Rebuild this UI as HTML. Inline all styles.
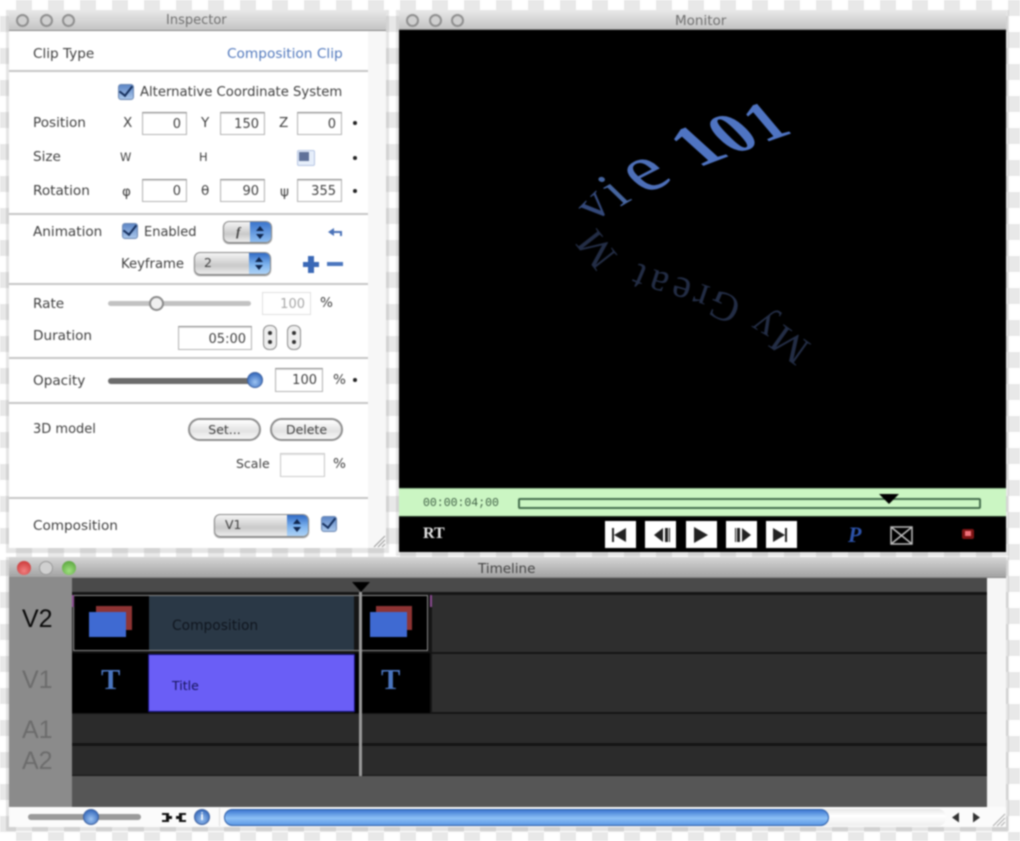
<!DOCTYPE html>
<html><head><meta charset="utf-8"><title>Inspector</title>
<style>
html,body{margin:0;padding:0;background:#fff}
#p{position:relative;width:1020px;height:841px;overflow:hidden;filter:blur(.8px);
background-color:#fff;background-image:conic-gradient(#e8e8e8 25%,#fff 0 50%,#e8e8e8 0 75%,#fff 0);background-size:32px 32px;font-family:"DejaVu Sans","Liberation Sans",sans-serif;font-size:13.6px;color:#404040}
#p div{position:absolute;box-sizing:border-box}
.t{white-space:nowrap;line-height:16px;height:16px}
.f{background:#fff;border:1px solid #b4b4b4;border-top-color:#8c8c8c;text-align:right;padding-right:5px;line-height:23px;font-size:13px;box-shadow:inset 0 1px 1px #ddd}
.h{left:9px;width:359px;height:2px;background:#c6c6c6}
.tb{background:linear-gradient(#e8e8e8,#c4c4c4);border-bottom:1px solid #888}
.l{width:13px;height:13px;border-radius:50%;border:2px solid #8f8f8f;background:#d0d0d0}
.d{width:4px;height:4px;border-radius:50%;background:#222}
.cb{width:16px;height:16px;border-radius:3px;background:linear-gradient(#5d86c6,#a9c6ea);border:1px solid #6b87b2}
.cb:after{content:"";position:absolute;left:3px;top:-2px;width:6px;height:11px;border:solid #16305e;border-width:0 2.5px 2.5px 0;transform:rotate(38deg)}
.pop{border:1px solid #8a8a8a;border-radius:6px;background:linear-gradient(#f4f4f4,#c9c9c9 60%,#ececec);box-shadow:0 1px 1px #888;overflow:hidden;padding-left:9px;line-height:20px;font-size:12.5px}
.pop i{position:absolute;right:0;top:0;bottom:0;width:21px;background:linear-gradient(#2f69c4,#7db3ee 55%,#aed3f6)}
.pop i:before{content:"";position:absolute;left:6px;top:4px;border:4px solid transparent;border-top:0;border-bottom:5px solid #10264d}
.pop i:after{content:"";position:absolute;left:6px;top:12px;border:4px solid transparent;border-bottom:0;border-top:5px solid #10264d}
.btn{border:2px solid #8e8e8e;border-radius:12px;background:linear-gradient(#fff,#e2e2e2 55%,#f6f6f6);text-align:center;line-height:19px;font-size:12.5px}
.st{width:14px;height:25px;border:1.5px solid #8b8b8b;border-radius:6px;background:#eee}
.st:before,.st:after{content:"";position:absolute;left:3.5px;width:4px;height:4px;background:#333;border-radius:50%}
.st:before{top:5px}.st:after{bottom:5px}
.kb{width:16px;height:16px;border-radius:50%;background:radial-gradient(circle at 50% 65%,#9cc3f2,#3468bb 80%);border:1px solid #3c5f9d}
.mb{width:31px;height:27px;background:#fff;top:521px}
.tr{font-family:"Liberation Sans",sans-serif;font-size:25px;line-height:28px;height:28px;left:22px}
</style></head><body><div id="p">

<!-- Inspector -->
<div style="left:6px;top:10px;width:383px;height:543px;background:#888;opacity:.22"></div>
<div style="left:9px;top:10px;width:377px;height:538px;background:#fff"></div>
<div class="tb" style="left:9px;top:10px;width:377px;height:21px"></div>
<div class="l" style="left:16px;top:14px"></div><div class="l" style="left:40px;top:14px"></div><div class="l" style="left:62px;top:14px"></div>
<div class="t" style="left:166px;top:13px;color:#707070;font-size:13px">Inspector</div>
<div style="left:368px;top:31px;width:18px;height:517px;background:#f7f7f7"></div>
<div class="h" style="top:70px"></div><div class="h" style="top:213px"></div><div class="h" style="top:283px"></div><div class="h" style="top:357px"></div><div class="h" style="top:402px"></div><div class="h" style="top:497px"></div>

<div class="t" style="left:33px;top:46px">Clip Type</div>
<div class="t" style="left:227px;top:46px;color:#5279bd;font-size:13.7px">Composition Clip</div>
<div class="cb" style="left:118px;top:84px"></div>
<div class="t" style="left:140px;top:85px;font-size:13.2px">Alternative Coordinate System</div>

<div class="t" style="left:33px;top:115px">Position</div>
<div class="t" style="left:123px;top:115px">X</div><div class="f" style="left:142px;top:112px;width:45px;height:23px">0</div>
<div class="t" style="left:201px;top:115px">Y</div><div class="f" style="left:220px;top:112px;width:45px;height:23px">150</div>
<div class="t" style="left:279px;top:115px">Z</div><div class="f" style="left:297px;top:112px;width:45px;height:23px">0</div>
<div class="d" style="left:353px;top:121px"></div>

<div class="t" style="left:33px;top:149px">Size</div>
<div class="t" style="left:120px;top:149px;font-size:11.5px">W</div><div class="t" style="left:199px;top:149px;font-size:11.5px">H</div>
<div style="left:297px;top:150px;width:18px;height:16px;background:#e6eefa;border:1px solid #b6c6e4;border-radius:2px"></div>
<div style="left:299px;top:152px;width:10px;height:9px;background:#5f7199"></div>
<div class="d" style="left:353px;top:156px"></div>

<div class="t" style="left:33px;top:183px">Rotation</div>
<div class="t" style="left:122px;top:184px">φ</div><div class="f" style="left:142px;top:179px;width:45px;height:23px">0</div>
<div class="t" style="left:201px;top:183px">θ</div><div class="f" style="left:220px;top:179px;width:45px;height:23px">90</div>
<div class="t" style="left:280px;top:184px">ψ</div><div class="f" style="left:297px;top:179px;width:45px;height:23px">355</div>
<div class="d" style="left:353px;top:189px"></div>

<div class="t" style="left:33px;top:224px">Animation</div>
<div class="cb" style="left:122px;top:223px"></div>
<div class="t" style="left:144px;top:225px;font-size:13px">Enabled</div>
<div class="pop" style="left:223px;top:221px;width:49px;height:22px;font-family:'Liberation Serif',serif;font-style:italic;font-weight:bold">&nbsp;f<i style="background:linear-gradient(#3a74cc,#8cbcf0)"></i></div>
<svg style="position:absolute;left:326px;top:226px" width="18" height="13"><path d="M2 6 L8 2 L8 5 L16 5 L16 10 L14 10 L14 7 L8 7 L8 10 Z" fill="#4a72b8"/></svg>
<div class="t" style="left:121px;top:257px;font-size:13.2px">Keyframe</div>
<div class="pop" style="left:194px;top:252px;width:77px;height:23px">2<i></i></div>
<div style="left:303px;top:262px;width:16px;height:5px;background:#3a68b6"></div><div style="left:308px;top:256px;width:6px;height:17px;background:#3a68b6"></div>
<div style="left:327px;top:262px;width:16px;height:4px;background:#4a76be"></div>

<div class="t" style="left:33px;top:296px">Rate</div>
<div style="left:108px;top:301px;width:143px;height:5px;border-radius:3px;background:#c2c2c2"></div>
<div style="left:149px;top:296px;width:15px;height:15px;border-radius:50%;background:#f0f0f0;border:2px solid #8a8a8a"></div>
<div class="f" style="left:262px;top:292px;width:49px;height:23px;color:#a8a8a8;border-color:#e0e0e0;box-shadow:none">100</div>
<div class="t" style="left:320px;top:295px">%</div>
<div class="t" style="left:33px;top:328px">Duration</div>
<div class="f" style="left:178px;top:326px;width:74px;height:24px;line-height:25px">05:00</div>
<div class="st" style="left:263px;top:325px"></div><div class="st" style="left:287px;top:325px"></div>

<div class="t" style="left:33px;top:373px">Opacity</div>
<div style="left:108px;top:378px;width:150px;height:6px;border-radius:3px;background:#6c6c6c"></div>
<div class="kb" style="left:247px;top:372px"></div>
<div class="f" style="left:275px;top:368px;width:48px;height:24px;line-height:24px">100</div>
<div class="t" style="left:333px;top:372px">%</div>
<div class="d" style="left:353px;top:378px"></div>

<div class="t" style="left:33px;top:422px;font-size:13px">3D model</div>
<div class="btn" style="left:188px;top:418px;width:73px;height:23px">Set...</div>
<div class="btn" style="left:270px;top:418px;width:73px;height:23px">Delete</div>
<div class="t" style="left:236px;top:456px;font-size:12.5px">Scale</div>
<div class="f" style="left:280px;top:453px;width:45px;height:24px;border-color:#ccc"></div>
<div class="t" style="left:333px;top:456px">%</div>

<div class="t" style="left:33px;top:518px">Composition</div>
<div class="pop" style="left:214px;top:514px;width:95px;height:23px;padding-left:10px">V1<i></i></div>
<div class="cb" style="left:321px;top:516px"></div>
<svg style="position:absolute;left:370px;top:533px" width="16" height="15"><path d="M4 14 L15 3 M8 14 L15 7 M12 14 L15 11" stroke="#999" fill="none"/></svg>

<!-- Monitor -->
<div style="left:396px;top:10px;width:613px;height:546px;background:#888;opacity:.2"></div>
<div class="tb" style="left:399px;top:10px;width:607px;height:20px"></div>
<div class="l" style="left:406px;top:14px"></div><div class="l" style="left:429px;top:14px"></div><div class="l" style="left:451px;top:14px"></div>
<div class="t" style="left:675px;top:13px;color:#707070;font-size:13.5px">Monitor</div>
<div style="left:399px;top:30px;width:607px;height:458px;background:#000"></div>
<svg style="position:absolute;left:399px;top:30px" width="607" height="458" viewBox="399 30 607 458">
<defs><path id="lo" d="M812 345 C770 312 730 292 690 280 C655 270 625 262 606 240 C598 230 592 218 588 200"/></defs>
<text font-family="Liberation Serif" font-size="41" letter-spacing="5" fill="#232d45"><textPath href="#lo">My Great M</textPath></text>
<g font-family="Liberation Serif" fill="#4d6fb8">
<text transform="matrix(.7,-.7,.72,.7,595,224)" font-size="50" fill="#34497a">v</text>
<text transform="matrix(.84,-.5,.72,.7,620,207)" font-size="56" fill="#46659f">i</text>
<text transform="matrix(.88,-.45,.74,.68,645,195)" font-size="78">e</text>
<text transform="matrix(.94,-.36,.74,.67,698,168)" font-size="72" font-weight="bold" fill="#4f74c2">1</text>
<text transform="matrix(.94,-.34,.7,.71,732,155)" font-size="68" font-weight="bold" fill="#4f74c2">0</text>
<text transform="matrix(.94,-.33,.64,.76,764,143)" font-size="64" font-weight="bold" fill="#4f74c2">1</text>
</g></svg>
<div style="left:399px;top:488px;width:607px;height:29px;background:#cbf6c3;border-top:1px solid #8fb98d;border-bottom:1px solid #2a3a2a"></div>
<div class="t" style="left:423px;top:496px;font-family:'Liberation Mono',monospace;font-size:11.5px;color:#3f5f45">00:00:04;00</div>
<div style="left:518px;top:498px;width:463px;height:11px;border:2px solid #47704f;border-radius:2px"></div>
<div style="left:879px;top:494px;width:0;height:0;border:10px solid transparent;border-bottom:0;border-top:10px solid #000"></div>
<div style="left:399px;top:517px;width:607px;height:35px;background:#000"></div>
<div class="t" style="left:423px;top:526px;font-family:'Liberation Serif',serif;font-weight:bold;font-size:16px;color:#e4e4e4">RT</div>
<div class="mb" style="left:605px"></div><div class="mb" style="left:645px"></div><div class="mb" style="left:686px"></div><div class="mb" style="left:726px"></div><div class="mb" style="left:766px"></div>
<svg style="position:absolute;left:600px;top:520px" width="330" height="30"><g fill="#222">
<path d="M12 8h2v14h-2zM14 15l12-7v14z"/>
<path d="M54 15l9-7v14zM65 8h3v14h-3zM69 8h1v14h-1z"/>
<path d="M94 7l14 8-14 8z"/>
<path d="M135 8h1v14h-1zM137 8h3v14h-3zM142 8l9 7-9 7z"/>
<path d="M173 8l12 7-12 7zM185 8h2v14h-2z"/></g>
<path d="M291 7h21v17h-21zM291 7l21 17M312 7l-21 17" stroke="#bbb" stroke-width="1.5" fill="none"/></svg>
<div class="t" style="left:848px;top:525px;font-family:'Liberation Serif',serif;font-style:italic;font-weight:bold;font-size:22px;line-height:20px;height:20px;color:#2c52a8">P</div>
<div style="left:962px;top:529px;width:12px;height:10px;background:#7d1414;border-radius:2px"></div>
<div style="left:965px;top:531px;width:6px;height:5px;background:#f0707a"></div>

<!-- Timeline -->
<div style="left:6px;top:557px;width:1003px;height:274px;background:#777;opacity:.2"></div>
<div class="tb" style="left:9px;top:557px;width:997px;height:21px;background:linear-gradient(#d6d6d6,#a2a2a2)"></div>
<div style="left:17px;top:561px;width:14px;height:14px;border-radius:50%;background:radial-gradient(circle at 50% 70%,#f08080,#c42a2a)"></div>
<div class="l" style="left:39px;top:561px;border:1px solid #999;width:14px;height:14px"></div>
<div style="left:62px;top:561px;width:14px;height:14px;border-radius:50%;background:radial-gradient(circle at 50% 70%,#a0e080,#4c9a30)"></div>
<div class="t" style="left:478px;top:561px;color:#444;font-size:13.5px">Timeline</div>
<div style="left:9px;top:578px;width:63px;height:229px;background:#8b8b8b"></div>
<div style="left:72px;top:578px;width:915px;height:14px;background:#4a4a4a"></div>
<div style="left:72px;top:592px;width:915px;height:184px;background:#151515"></div>
<div style="left:432px;top:595px;width:555px;height:57px;background:#2e2e2e"></div>
<div style="left:432px;top:654px;width:555px;height:58px;background:#2e2e2e"></div>
<div style="left:72px;top:714px;width:915px;height:29px;background:#2b2b2b"></div>
<div style="left:72px;top:746px;width:915px;height:29px;background:#2b2b2b"></div>
<div style="left:72px;top:776px;width:915px;height:31px;background:#565656"></div>
<div style="left:987px;top:578px;width:19px;height:229px;background:#f6f6f6"></div>

<div class="t tr" style="top:605px;color:#0a0a0a">V2</div>
<div class="t tr" style="top:666px;color:#6c6c6c">V1</div>
<div class="t tr" style="top:716px;color:#6c6c6c">A1</div>
<div class="t tr" style="top:747px;color:#6c6c6c">A2</div>

<div style="left:75px;top:596px;width:74px;height:54px;background:#000"></div>
<div style="left:149px;top:596px;width:205px;height:54px;background:#2a3846"></div>
<div style="left:362px;top:596px;width:66px;height:54px;background:#000"></div>
<div style="left:73px;top:595px;width:355px;height:56px;border:1.5px solid #8a8a8a"></div>
<div style="left:72px;top:595px;width:2px;height:12px;background:#8a4a90"></div>
<div style="left:430px;top:595px;width:2px;height:12px;background:#8a4a90"></div>
<div style="left:96px;top:606px;width:36px;height:24px;background:#8e3434"></div>
<div style="left:89px;top:612px;width:37px;height:25px;background:#3f6ad2"></div>
<div style="left:376px;top:606px;width:36px;height:24px;background:#8e3434"></div>
<div style="left:370px;top:612px;width:37px;height:25px;background:#3f6ad2"></div>
<div class="t" style="left:172px;top:618px;color:#10161f;font-size:13.8px">Composition</div>
<div style="left:72px;top:653px;width:77px;height:60px;background:#000"></div>
<div style="left:354px;top:653px;width:76px;height:60px;background:#000"></div>
<div style="left:148px;top:654px;width:207px;height:58px;background:#6a5ef6;border:1px solid #14107a"></div>
<div class="t" style="left:172px;top:678px;color:#16145a;font-size:12.5px">Title</div>
<div class="t" style="left:101px;top:664px;height:32px;line-height:32px;font-family:'Liberation Serif',serif;font-weight:bold;font-size:29px;color:#4b76c0">T</div>
<div class="t" style="left:381px;top:664px;height:32px;line-height:32px;font-family:'Liberation Serif',serif;font-weight:bold;font-size:29px;color:#4b76c0">T</div>
<div style="left:359px;top:592px;width:3px;height:184px;background:#9a9a9a"></div>
<div style="left:352px;top:582px;width:0;height:0;border:9px solid transparent;border-bottom:0;border-top:10px solid #000"></div>

<div style="left:9px;top:807px;width:997px;height:20px;background:#fbfbfb"></div>
<div style="left:28px;top:814px;width:113px;height:6px;border-radius:3px;background:#9a9a9a"></div>
<div class="kb" style="left:83px;top:809px"></div>
<svg style="position:absolute;left:160px;top:811px" width="28" height="13"><path d="M2 2h7v3h3v3h-3v3h-7v-2h4v-5h-4zM26 2h-7v3h-3v3h3v3h7v-2h-4v-5h4z" fill="#111"/></svg>
<div class="kb" style="left:194px;top:809px;color:#fff;font:bold 11px/14px 'Liberation Sans';text-align:center">i</div>
<div style="left:219px;top:808px;width:1px;height:18px;background:#ddd"></div>
<div style="left:224px;top:809px;width:722px;height:17px;background:linear-gradient(#e6e6e6,#fff 40%,#eee);border-radius:8px"></div>
<div style="left:224px;top:809px;width:605px;height:17px;border-radius:9px;background:linear-gradient(#3d78d2,#8cc0f6 55%,#5c98e4);border:1px solid #2a5ca8"></div>
<svg style="position:absolute;left:948px;top:811px" width="36" height="13"><path d="M4 6.500l7-5v10zM25 1.500l7 5-7 5z" fill="#333"/></svg>
<svg style="position:absolute;left:990px;top:811px" width="16" height="16"><path d="M3 15 L15 3 M7 15 L15 7 M11 15 L15 11" stroke="#aaa" fill="none"/></svg>
</div></body></html>
